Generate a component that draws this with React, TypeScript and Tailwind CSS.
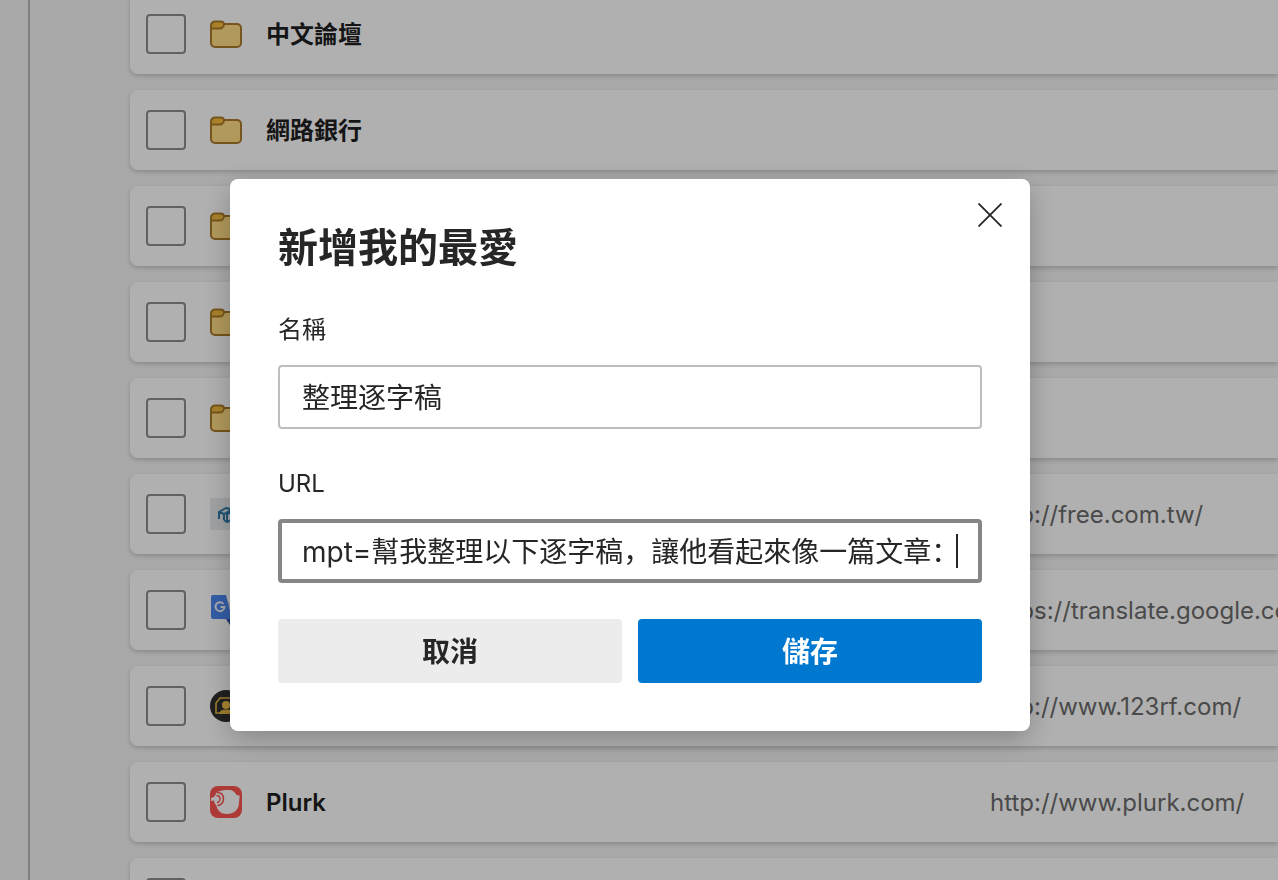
import { useState } from "react";

type IconKind = "folder" | "cube" | "translate" | "camera" | "plurk";

interface Favorite {
  id: number;
  icon: IconKind;
  name?: string;
  url?: string;
}

const favorites: Favorite[] = [
  { id: 1, icon: "folder", name: "中文論壇" },
  { id: 2, icon: "folder", name: "網路銀行" },
  { id: 3, icon: "folder" },
  { id: 4, icon: "folder" },
  { id: 5, icon: "folder" },
  { id: 6, icon: "cube", url: "http://free.com.tw/" },
  { id: 7, icon: "translate", url: "https://translate.google.com/" },
  { id: 8, icon: "camera", url: "http://www.123rf.com/" },
  { id: 9, icon: "plurk", name: "Plurk", url: "http://www.plurk.com/" },
  { id: 10, icon: "folder" },
];

function FolderIcon() {
  return (
    <svg viewBox="0 -1 32 32" className="size-8" aria-hidden="true">
      <path
        d="M1 9.5V24a4 4 0 0 0 4 4h22a4 4 0 0 0 4-4V9a4 4 0 0 0-4-4H14L10 9.5Z"
        fill="#fddc83"
      />
      <path
        d="M1 9.5V6.500a4 4 0 0 1 4-4h6a3 3 0 0 1 3 2.500c0 2.500-2 4.500-4.500 4.500Z"
        fill="#f3b93c"
      />
      <path
        d="M1 9.500V24a4 4 0 0 0 4 4h22a4 4 0 0 0 4-4V9a4 4 0 0 0-4-4H14a3 3 0 0 0-3-2.500H5a4 4 0 0 0-4 4ZM1 9.500h8.500C12 9.500 14 7.500 14 5"
        fill="none"
        stroke="#a8792a"
        strokeWidth="2"
        strokeLinejoin="round"
      />
    </svg>
  );
}

function CubeIcon() {
  return (
    <svg viewBox="0 0 32 32" className="size-8" aria-hidden="true">
      <path d="M0 0h32v32H0Z" fill="#e6e8ea" />
      <path
        d="M9 21v-7l7-4 8 2-7 4v7M9 14l5 2v6M17 16l7-3v8l-7 3-3-2M14 16l7-4"
        fill="none"
        stroke="#2b79a8"
        strokeWidth="2"
        strokeLinejoin="round"
      />
    </svg>
  );
}

function TranslateIcon() {
  return (
    <svg viewBox="0 0 32 32" className="size-8" aria-hidden="true">
      <path d="M14 8h16a2 2 0 0 1 2 2v19a2 2 0 0 1-2 2H20Z" fill="#dfe2e6" />
      <path d="m16 25 4 6 6-6Z" fill="#2b4fa8" />
      <path d="M3 1h13l6 24H3a2 2 0 0 1-2-2V3a2 2 0 0 1 2-2Z" fill="#4a86ee" />
      <path
        d="M13.500 9.800A4.500 4.500 0 1 0 14.500 13H10.500"
        fill="none"
        stroke="#eef2f8"
        strokeWidth="2"
      />
    </svg>
  );
}

function CameraIcon() {
  return (
    <svg viewBox="0 0 32 32" className="size-8" aria-hidden="true">
      <circle cx="16" cy="16" r="16" fill="#2e2e2e" />
      <path
        d="M6 23V13l4-5h13l3 4v11Z"
        fill="none"
        stroke="#e2b541"
        strokeWidth="1.600"
      />
      <circle cx="16" cy="15" r="4" fill="#f0c04a" />
      <path d="M9 24c1-4 4-4.500 7-4.500s6 .5 7 4.500Z" fill="#e2b541" />
    </svg>
  );
}

function PlurkIcon() {
  return (
    <svg viewBox="0 0 32 32" className="size-8" aria-hidden="true">
      <rect width="32" height="32" rx="8" fill="#f8544f" />
      <path
        d="M6 7C9 4.500 14 4 19 4c4 0 6 2 7.500 5l3 .5c.5 2-.5 4-.5 7 0 7-5 11.500-12 11.500-6 0-9.500-3.500-10.500-8L4 16Z"
        fill="#fbfbfb"
      />
      <path
        d="M7 6.500c4.500 0 6.500 3 6.500 6.500s-2.500 6.500-6 6.500"
        fill="none"
        stroke="#f8544f"
        strokeWidth="1.500"
      />
      <path
        d="M6.500 9.500c2 0 3.500 1.500 3.500 3.500s-1.500 3.500-3 3.500"
        fill="none"
        stroke="#f8544f"
        strokeWidth="1.500"
      />
      <path d="m1 12 3-1 1-2 2 2.500 1.500 1-1.500 2L6.500 16l-2.500-1.500-3 .5Z" fill="#fbfbfb" />
    </svg>
  );
}

const icons: Record<IconKind, () => React.JSX.Element> = {
  folder: FolderIcon,
  cube: CubeIcon,
  translate: TranslateIcon,
  camera: CameraIcon,
  plurk: PlurkIcon,
};

function FavoriteRow({ item }: { item: Favorite }) {
  const Icon = icons[item.icon];
  return (
    <li className="grid h-20 shrink-0 grid-cols-[40px_32px_700px_1fr] items-center gap-6 rounded-l-lg bg-[#fdfdfd] pl-4 shadow-[0_2px_5px_rgba(0,0,0,0.2)]">
      <input
        type="checkbox"
        aria-label={item.name ?? item.url ?? "資料夾"}
        className="size-10 appearance-none rounded border-2 border-[#8c8c8c]"
      />
      <Icon />
      <span className="pt-0.5 text-2xl font-semibold text-[#1f1f1f]">{item.name}</span>
      {item.url && (
        <a
          href={item.url}
          className="overflow-hidden pt-0.5 text-2xl whitespace-nowrap text-[#6a6a6a]"
        >
          {item.url}
        </a>
      )}
    </li>
  );
}

function AddFavoriteDialog() {
  const [name, setName] = useState("整理逐字稿");
  const [url, setUrl] = useState("mpt=幫我整理以下逐字稿，讓他看起來像一篇文章：");
  return (
    <form
      role="dialog"
      aria-modal="true"
      aria-labelledby="dialog-title"
      onSubmit={(e) => e.preventDefault()}
      className="relative w-full max-w-[800px] rounded-lg bg-white px-12 pt-[45px] pb-12 text-[#262626] shadow-[0_8px_28px_rgba(0,0,0,0.25)]"
    >
      <button
        type="button"
        aria-label="關閉"
        className="absolute top-4 right-5 flex size-10 items-center justify-center"
      >
        <svg viewBox="0 0 24 24" className="size-6" aria-hidden="true">
          <path d="M.5.5l23 23M23.500.5l-23 23" stroke="#262626" strokeWidth="1.800" />
        </svg>
      </button>
      <h2 id="dialog-title" className="text-[40px] leading-12 font-bold">
        新增我的最愛
      </h2>
      <label htmlFor="fav-name" className="mt-[42px] mb-[19px] block text-2xl">
        名稱
      </label>
      <input
        id="fav-name"
        value={name}
        onChange={(e) => setName(e.target.value)}
        className="block h-16 w-full rounded border-2 border-[#bebebe] px-[22px] pb-0.5 text-[28px] outline-none"
      />
      <label htmlFor="fav-url" className="mt-[39px] mb-[19px] block text-2xl">
        URL
      </label>
      <div className="relative">
        <input
          id="fav-url"
          value={url}
          onChange={(e) => setUrl(e.target.value)}
          className="block h-16 w-full rounded border-4 border-[#868686] pr-4 pb-0.5 pl-5 text-[28px] caret-transparent outline-none"
        />
        <span className="absolute top-[15px] right-6 h-[34px] w-0.5 bg-[#262626]" />
      </div>
      <div className="mt-9 grid grid-cols-2 gap-4">
        <button type="button" className="h-16 rounded bg-[#ececec] pt-0.5 text-[28px] font-bold">
          取消
        </button>
        <button
          type="submit"
          className="h-16 rounded bg-[#0078d0] pt-0.5 text-[28px] font-bold text-white"
        >
          儲存
        </button>
      </div>
    </form>
  );
}

export default function App() {
  return (
    <div className="font-[Inter,'Noto_Sans_CJK_SC',sans-serif]">
      <main className="flex h-screen overflow-hidden bg-[#f3f3f3]">
        <aside className="w-[30px] shrink-0 border-r-2 border-[#b8b8b8]" />
        <ul className="-mt-1.5 ml-[100px] flex min-w-0 flex-1 flex-col gap-4">
          {favorites.map((item) => (
            <FavoriteRow key={item.id} item={item} />
          ))}
        </ul>
      </main>
      <div className="fixed inset-0 flex items-center justify-center bg-black/30 pt-[30px] pr-[18px]">
        <AddFavoriteDialog />
      </div>
    </div>
  );
}
